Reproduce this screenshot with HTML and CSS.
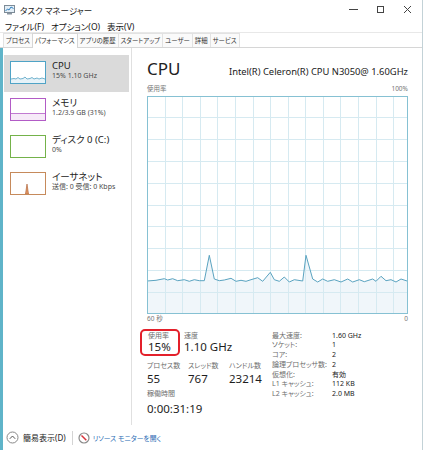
FILE: index.html
```html
<!DOCTYPE html>
<html lang="ja">
<head>
    <meta charset="UTF-8">
    <title>タスク マネージャー</title>
    <link rel="stylesheet" href="styles.css">
</head>
<body>
    <div class="window">
        <div class="titlebar">
            <svg class="app-icon" width="11" height="10" viewBox="0 0 11 10">
                <rect x="0.5" y="0.5" width="10" height="7" fill="#e3eef6" stroke="#7d8b97"/>
                <polyline points="1.5,6 3.5,4 5,5 7,2 9.5,3.5" fill="none" stroke="#2f7fc0" stroke-width="1"/>
                <rect x="3" y="8" width="5" height="1.5" fill="#8a96a1"/>
            </svg>
            <span class="title">タスク マネージャー</span>
            <div class="controls">
                <span class="ctrl">
                    <svg width="9" height="9" viewBox="0 0 9 9"><line x1="0" y1="4.5" x2="9" y2="4.5" stroke="#444"/></svg>
                </span>
                <span class="ctrl">
                    <svg width="9" height="9" viewBox="0 0 9 9"><rect x="1.5" y="1.5" width="6" height="6" fill="none" stroke="#444"/></svg>
                </span>
                <span class="ctrl">
                    <svg width="9" height="9" viewBox="0 0 9 9"><path d="M1 1 L8 8 M8 1 L1 8" stroke="#444"/></svg>
                </span>
            </div>
        </div>

        <div class="menubar">
            <span>ファイル(F)</span>
            <span>オプション(O)</span>
            <span>表示(V)</span>
        </div>

        <div class="tabs">
            <span class="tab">プロセス</span>
            <span class="tab active">パフォーマンス</span>
            <span class="tab">アプリの履歴</span>
            <span class="tab">スタートアップ</span>
            <span class="tab">ユーザー</span>
            <span class="tab">詳細</span>
            <span class="tab">サービス</span>
        </div>

        <div class="body">
            <div class="main">
                <div class="sidebar">
                    <div class="item selected">
                        <div class="thumb cpu">
                            <svg width="34" height="21" viewBox="0 0 34 21">
                                <polygon points="0,17 3,16.5 5,17 7,15.5 9,17 12,16.5 14,15 16,17 19,16.5 21,15.5 23,17 26,16 28,17 31,16 34,17 34,21 0,21" fill="#e6f2f8"/>
                                <polyline points="0,17 3,16.5 5,17 7,15.5 9,17 12,16.5 14,15 16,17 19,16.5 21,15.5 23,17 26,16 28,17 31,16 34,17" fill="none" stroke="#4f9fc2" stroke-width="0.8"/>
                            </svg>
                        </div>
                        <div class="item-text">
                            <div class="item-name">CPU</div>
                            <div class="item-sub">15% 1.10 GHz</div>
                        </div>
                    </div>
                    <div class="item">
                        <div class="thumb mem">
                            <svg width="34" height="21" viewBox="0 0 34 21">
                                <rect x="0" y="14.5" width="34" height="7" fill="#f6eaf8"/>
                                <line x1="0" y1="14.5" x2="34" y2="14.5" stroke="#b25bc6" stroke-width="0.8"/>
                            </svg>
                        </div>
                        <div class="item-text">
                            <div class="item-name">メモリ</div>
                            <div class="item-sub">1.2/3.9 GB (31%)</div>
                        </div>
                    </div>
                    <div class="item">
                        <div class="thumb disk"></div>
                        <div class="item-text">
                            <div class="item-name">ディスク 0 (C:)</div>
                            <div class="item-sub">0%</div>
                        </div>
                    </div>
                    <div class="item">
                        <div class="thumb net">
                            <svg width="34" height="21" viewBox="0 0 34 21">
                                <polygon points="14.5,21 16,11 17.5,21" fill="#e49a66" stroke="#a7582c" stroke-width="0.6"/>
                            </svg>
                        </div>
                        <div class="item-text">
                            <div class="item-name">イーサネット</div>
                            <div class="item-sub">送信: 0 受信: 0 Kbps</div>
                        </div>
                    </div>
                </div>

                <div class="detail">
                    <div class="detail-head">
                        <span class="big">CPU</span>
                        <span class="model">Intel(R) Celeron(R) CPU N3050@ 1.60GHz</span>
                    </div>
                    <div class="axis">
                        <span>使用率</span>
                        <span>100%</span>
                    </div>
                    <svg class="graph" width="261" height="218" viewBox="0 0 261 218">
                        <polygon fill="#f0f6fa" points="0,185 9,184.3 17.3,182.7 20.7,184 25.7,182.7 30.7,184.7 37.3,183.7 42.3,185.3 47.3,183.7 52.3,184.7 57.3,184.7 62.3,159.3 67.3,183 72.3,184.7 77.3,184 84,182.3 89,185.3 94,184.3 99,185.3 104,183.7 110.7,181.7 115.7,185.3 123.3,176.3 127.3,183.7 132.3,185.3 137.3,181 142.3,186 147.3,183.7 155.7,185 159,159.3 165.7,183 170.7,186 175.7,183 180.7,185.3 187.3,183.7 194,186 200.7,183 205.7,186 212.3,183.7 217.3,185.7 225.7,183 229,185.3 234,180.3 239,184.7 244,183.7 249,186 254,183 261,185.3 261,218 0,218"/>
                        <g stroke="#d6eaf1" stroke-width="1">
                            <line x1="0" y1="21.5" x2="261" y2="21.5"/>
                            <line x1="0" y1="43.5" x2="261" y2="43.5"/>
                            <line x1="0" y1="65.5" x2="261" y2="65.5"/>
                            <line x1="0" y1="87.5" x2="261" y2="87.5"/>
                            <line x1="0" y1="109.5" x2="261" y2="109.5"/>
                            <line x1="0" y1="130.5" x2="261" y2="130.5"/>
                            <line x1="0" y1="152.5" x2="261" y2="152.5"/>
                            <line x1="0" y1="174.5" x2="261" y2="174.5"/>
                            <line x1="0" y1="196.5" x2="261" y2="196.5"/>
                            <line x1="18.5" y1="0" x2="18.5" y2="218"/>
                            <line x1="35.5" y1="0" x2="35.5" y2="218"/>
                            <line x1="53.5" y1="0" x2="53.5" y2="218"/>
                            <line x1="70.5" y1="0" x2="70.5" y2="218"/>
                            <line x1="88.5" y1="0" x2="88.5" y2="218"/>
                            <line x1="106.5" y1="0" x2="106.5" y2="218"/>
                            <line x1="123.5" y1="0" x2="123.5" y2="218"/>
                            <line x1="141.5" y1="0" x2="141.5" y2="218"/>
                            <line x1="158.5" y1="0" x2="158.5" y2="218"/>
                            <line x1="176.5" y1="0" x2="176.5" y2="218"/>
                            <line x1="193.5" y1="0" x2="193.5" y2="218"/>
                            <line x1="211.5" y1="0" x2="211.5" y2="218"/>
                            <line x1="229.5" y1="0" x2="229.5" y2="218"/>
                            <line x1="246.5" y1="0" x2="246.5" y2="218"/>
                        </g>
                        <polyline fill="none" stroke="#5aa3c0" stroke-width="1" points="0,185 9,184.3 17.3,182.7 20.7,184 25.7,182.7 30.7,184.7 37.3,183.7 42.3,185.3 47.3,183.7 52.3,184.7 57.3,184.7 62.3,159.3 67.3,183 72.3,184.7 77.3,184 84,182.3 89,185.3 94,184.3 99,185.3 104,183.7 110.7,181.7 115.7,185.3 123.3,176.3 127.3,183.7 132.3,185.3 137.3,181 142.3,186 147.3,183.7 155.7,185 159,159.3 165.7,183 170.7,186 175.7,183 180.7,185.3 187.3,183.7 194,186 200.7,183 205.7,186 212.3,183.7 217.3,185.7 225.7,183 229,185.3 234,180.3 239,184.7 244,183.7 249,186 254,183 261,185.3"/>
                        <rect x="0.5" y="0.5" width="260" height="217" fill="none" stroke="#86c1d3"/>
                    </svg>
                    <div class="axis bottom">
                        <span>60 秒</span>
                        <span>0</span>
                    </div>

                    <div class="stats">
                        <div class="stats-left">
                            <div class="stat-row">
                                <div class="stat usage">
                                    <div class="label">使用率</div>
                                    <div class="value">15%</div>
                                </div>
                                <div class="stat speed">
                                    <div class="label">速度</div>
                                    <div class="value">1.10 GHz</div>
                                </div>
                            </div>
                            <div class="stat-row counts">
                                <div class="stat">
                                    <div class="label">プロセス数</div>
                                    <div class="value">55</div>
                                </div>
                                <div class="stat">
                                    <div class="label">スレッド数</div>
                                    <div class="value">767</div>
                                </div>
                                <div class="stat">
                                    <div class="label">ハンドル数</div>
                                    <div class="value">23214</div>
                                </div>
                            </div>
                            <div class="stat uptime">
                                <div class="label">稼働時間</div>
                                <div class="value">0:00:31:19</div>
                            </div>
                        </div>
                        <div class="specs">
                            <span class="key">最大速度:</span><span>1.60 GHz</span>
                            <span class="key">ソケット:</span><span>1</span>
                            <span class="key">コア:</span><span>2</span>
                            <span class="key">論理プロセッサ数:</span><span>2</span>
                            <span class="key">仮想化:</span><span>有効</span>
                            <span class="key">L1 キャッシュ:</span><span>112 KB</span>
                            <span class="key">L2 キャッシュ:</span><span>2.0 MB</span>
                        </div>
                    </div>
                </div>
            </div>

            <div class="footer">
                <svg width="13" height="13" viewBox="0 0 13 13">
                    <circle cx="6.5" cy="6.5" r="5.5" fill="none" stroke="#888"/>
                    <polyline points="3.8,7.8 6.5,5 9.2,7.8" fill="none" stroke="#555"/>
                </svg>
                <span class="fewer">簡易表示(D)</span>
                <span class="sep"></span>
                <svg width="12" height="12" viewBox="0 0 12 12">
                    <circle cx="6" cy="6" r="5" fill="#fff" stroke="#8a8a8a" stroke-width="1.2"/>
                    <line x1="3.5" y1="3.5" x2="8.3" y2="8.3" stroke="#d8323a" stroke-width="1.5"/>
                </svg>
                <span class="link">リソース モニターを開く</span>
            </div>
        </div>
    </div>
</body>
</html>
```

FILE: styles.css
```css
body {
    margin: 0;
    background-color: white;
    font-family: "Noto Sans", "Noto Sans CJK JP", sans-serif;
    font-feature-settings: "palt";
    color: #222;
}
.window {
    width: 422px;
    height: 450px;
    border-right: 1px solid #c3d2d7;
    display: flex;
    flex-direction: column;
    overflow: hidden;
}
.titlebar {
    height: 19px;
    display: flex;
    align-items: center;
    padding-left: 4px;
}
.app-icon {
    margin-right: 5px;
}
.title {
    font-size: 8.5px;
}
.controls {
    margin-left: auto;
    display: flex;
    padding-right: 1px;
}
.ctrl {
    width: 27px;
    display: flex;
    justify-content: center;
}
.menubar {
    height: 13px;
    display: flex;
    align-items: center;
    gap: 7px;
    padding-left: 5px;
    font-size: 8.5px;
    color: #111;
    border-bottom: 1px solid #e8e8e8;
}
.tabs {
    height: 14px;
    display: flex;
    padding-left: 3px;
    border-bottom: 1px solid #d6d6d6;
}
.tab {
    font-size: 6.4px;
    line-height: 13px;
    padding: 0 2px;
    color: #333;
    border: 1px solid #e2e2e2;
    border-bottom: none;
    margin-right: -1px;
    background-color: #fafafa;
}
.tab.active {
    background-color: white;
    border-color: #d6d6d6;
    margin-bottom: -1px;
    position: relative;
}
.body {
    flex: 1;
    display: flex;
    flex-direction: column;
    border-left: 3px solid #5fb4c9;
}
.main {
    flex: 1;
    display: flex;
}
.sidebar {
    width: 127px;
    padding: 7px 2px 0 1px;
    border-right: 1px solid #e0e0e0;
}
.item {
    display: flex;
    gap: 6px;
    height: 37px;
    box-sizing: border-box;
    padding: 6px 0 0 6px;
}
.item.selected {
    background-color: #dadada;
}
.thumb {
    width: 36px;
    height: 23px;
    box-sizing: border-box;
    border: 1px solid;
    background-color: white;
}
.thumb svg {
    display: block;
}
.thumb.cpu {
    border-color: #4fa3c6;
}
.thumb.mem {
    border-color: #b25bc6;
}
.thumb.disk {
    border-color: #74b24a;
}
.thumb.net {
    border-color: #c68a5b;
}
.item-name {
    font-size: 9.5px;
    line-height: 10px;
}
.item-sub {
    font-size: 7px;
    line-height: 10px;
    color: #4a4a4a;
}
.detail {
    flex: 1;
    padding: 10px 14px 0 15px;
}
.detail-head {
    display: flex;
    justify-content: space-between;
    align-items: baseline;
    line-height: 21px;
}
.big {
    font-size: 17px;
}
.model {
    font-size: 9.4px;
}
.axis {
    display: flex;
    justify-content: space-between;
    font-size: 6.5px;
    line-height: 14px;
    color: #777;
}
.axis.bottom {
    line-height: 10px;
}
.graph {
    display: block;
}
.stats {
    display: flex;
}
.stats-left {
    width: 125px;
}
.stat-row {
    display: flex;
}
.stat .label {
    font-size: 7px;
    line-height: 9px;
    color: #6d6d6d;
}
.stat .value {
    font-size: 11.5px;
    line-height: 14px;
    color: #1e1e1e;
}
.usage {
    margin: 5px 4px 0 -7px;
    padding: 0 6px;
    width: 24px;
    border: 2px solid #e3202b;
    border-radius: 5px;
}
.speed {
    margin-top: 7px;
}
.counts {
    margin-top: 5px;
}
.counts .stat {
    width: 41px;
}
.counts .label,
.uptime .label {
    line-height: 10px;
}
.counts .value {
    line-height: 16px;
}
.uptime {
    margin-top: 2px;
}
.uptime .value {
    line-height: 20px;
}
.specs {
    margin-top: 6.5px;
    display: grid;
    grid-template-columns: 60px auto;
    align-content: start;
    font-size: 7px;
    line-height: 9.75px;
    color: #222;
}
.specs .key {
    color: #6d6d6d;
}
.footer {
    height: 25px;
    display: flex;
    align-items: center;
    padding-left: 3px;
    font-size: 8px;
}
.fewer {
    margin-left: 4px;
    color: #222;
}
.sep {
    width: 1px;
    height: 14px;
    background-color: #d4d4d4;
    margin: 0 5px 0 6px;
}
.link {
    margin-left: 3px;
    font-size: 6.8px;
    color: #2b6cb4;
}
```
